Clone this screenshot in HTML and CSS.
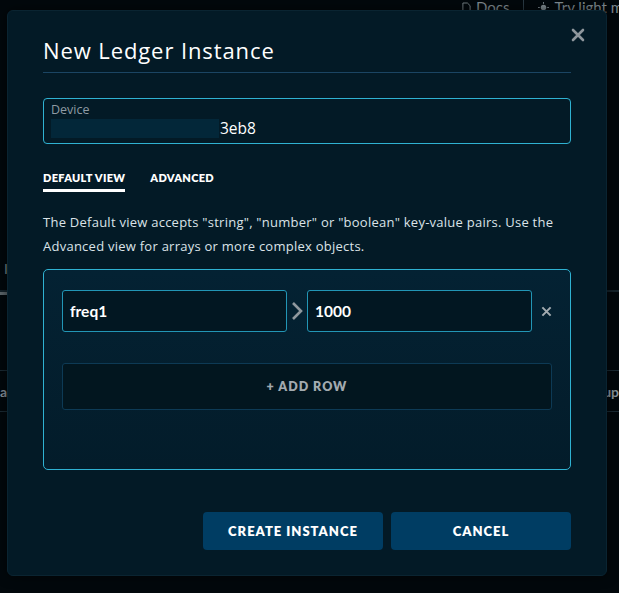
FILE: index.html
```html
<!DOCTYPE html>
<html lang="en">
<head>
<meta charset="utf-8">
<title>New Ledger Instance</title>
<link rel="stylesheet" href="styles.css">
</head>
<body>
<div class="page">
  <header class="topbar">
    <span class="top-link"><svg class="top-icon" viewBox="0 0 10 12" width="9" height="11"><path d="M1 1h5l3 3v7H1z" fill="none" stroke="#7f8a90" stroke-width="1"/></svg>Docs</span>
    <span class="top-sep"></span>
    <span class="top-link"><svg class="top-icon" viewBox="0 0 12 12" width="11" height="11"><circle cx="6" cy="6" r="3" fill="#7f8a90"/><path d="M6 0v2M6 10v2M0 6h2M10 6h2" stroke="#7f8a90" stroke-width="1"/></svg>Try light mode</span>
  </header>
  <nav class="bg-tabs"><span class="bg-tab">Instances</span></nav>
  <div class="bg-table">
    <div class="bg-row"><span>a</span><span>up</span></div>
  </div>
</div>

<div class="modal">
  <button class="close" aria-label="Close">
    <svg viewBox="0 0 14 14" width="14" height="14"><path d="M2 2L12 12M12 2L2 12" stroke="#8e969c" stroke-width="2.6" stroke-linecap="round"/></svg>
  </button>
  <h1 class="title">New Ledger Instance</h1>

  <div class="field">
    <label class="field-label">Device</label>
    <div class="field-value"><span class="redact"></span>3eb8</div>
  </div>

  <div class="tabs">
    <span class="tab active">DEFAULT VIEW</span>
    <span class="tab">ADVANCED</span>
  </div>

  <p class="desc">The Default view accepts "string", "number" or "boolean" key-value pairs. Use the Advanced view for arrays or more complex objects.</p>

  <div class="kv-box">
    <div class="kv-row">
      <div class="kv-input">freq1</div>
      <span class="kv-arrow"><svg viewBox="0 0 12 20" width="12" height="20"><path d="M2 2L10 10L2 18" fill="none" stroke="#8f989e" stroke-width="2.6"/></svg></span>
      <div class="kv-input">1000</div>
      <span class="kv-remove"><svg viewBox="0 0 12 12" width="11" height="11"><path d="M1.5 1.5L10.5 10.5M10.5 1.5L1.5 10.5" stroke="#a3abb0" stroke-width="2.2"/></svg></span>
    </div>
    <div class="add-row">+ ADD ROW</div>
  </div>

  <div class="actions">
    <button class="btn">CREATE INSTANCE</button>
    <button class="btn">CANCEL</button>
  </div>
</div>
</body>
</html>
```

FILE: styles.css
```css
* { box-sizing: border-box; }
html, body { margin: 0; padding: 0; }
body {
  background: #02080c;
  font-family: "Open Sans", "Lato", sans-serif;
  color: #e6ecef;
  width: 619px;
  height: 593px;
  overflow: hidden;
  position: relative;
}

/* background page */
.page { width: 619px; }
.topbar {
  display: flex;
  justify-content: flex-start;
  align-items: center;
  height: 20px;
  padding-left: 462px;
  gap: 14px;
  margin-top: -3px;
  font-family: "Lato", sans-serif;
  font-size: 15px;
  color: #7f8a90;
  white-space: nowrap;
  overflow: hidden;
}
.top-link { display: flex; align-items: center; gap: 5px; flex-shrink: 0; }
.top-sep { width: 1px; height: 20px; background: #2a3a44; flex-shrink: 0; }
.bg-tabs {
  margin-top: 240px;
  height: 35px;
  border-bottom: 2px solid #15232b;
  position: relative;
}
.bg-tab {
  display: inline-block;
  padding: 0 0 11px 4px;
  font-family: "Lato", sans-serif;
  font-size: 14px;
  color: #7c878d;
  border-bottom: 3px solid #5d676c;
  height: 35px;
}
.bg-table { margin-top: 78px; }
.bg-row {
  display: flex;
  justify-content: space-between;
  height: 42px;
  align-items: center;
  border-top: 1px solid #1a2a33;
  border-bottom: 1px solid #1a2a33;
  font-family: "Lato", sans-serif;
  font-size: 14px;
  font-weight: 700;
  color: #88939a;
}

/* modal */
.modal {
  position: absolute;
  left: 7px;
  top: 10px;
  width: 600px;
  height: 566px;
  background: #031a26;
  border: 1px solid #0a2431;
  border-radius: 6px;
  padding: 24px 35px 0 35px;
  box-shadow: 0 0 12px rgba(0,0,0,0.6);
}
.close {
  position: absolute;
  top: 17px;
  right: 21px;
  background: none;
  border: 0;
  padding: 0;
  width: 14px;
  height: 14px;
  display: block;
}
.close svg { display: block; }
.title {
  margin: 0;
  font-size: 22px;
  line-height: 30px;
  font-weight: 400;
  color: #ffffff;
  padding-bottom: 7px;
  border-bottom: 1px solid #1b4563;
  letter-spacing: 0.9px;
}
.field {
  margin-top: 25px;
  height: 46px;
  border: 1px solid #2fb2d2;
  border-radius: 4px;
  padding: 3px 7px 0 7px;
}
.field-label {
  display: block;
  font-size: 12.5px;
  line-height: 16px;
  color: #8f9ba3;
}
.field-value {
  display: flex;
  align-items: center;
  font-size: 15.5px;
  line-height: 21px;
  color: #ffffff;
}
.redact {
  display: inline-block;
  width: 168px;
  height: 19px;
  background: #032739;
  margin-right: 1px;
}
.tabs {
  display: flex;
  gap: 25px;
  margin-top: 27px;
  font-family: "Lato", sans-serif;
}
.tab {
  font-size: 11px;
  font-weight: 800;
  line-height: 14px;
  padding-bottom: 4px;
  border-bottom: 3px solid transparent;
  color: #ffffff;
  letter-spacing: 0.3px;
}
.tab.active { border-bottom-color: #ffffff; }
.desc {
  margin: 18px 0 0 0;
  font-size: 13px;
  line-height: 24px;
  color: #dbe3e8;
  letter-spacing: 0.25px;
}
.kv-box {
  margin-top: 11px;
  height: 201px;
  border: 1px solid #2fb2d2;
  border-radius: 5px;
  background: linear-gradient(#042233, #031c2a);
  padding: 20px 18px 0 18px;
}
.kv-row {
  display: flex;
  align-items: center;
}
.kv-input {
  width: 225px;
  height: 42px;
  border: 1px solid #2296b6;
  border-radius: 3px;
  background: #021722;
  display: flex;
  align-items: center;
  padding-left: 7px;
  font-family: "Lato", sans-serif;
  font-size: 15.5px;
  font-weight: 700;
  color: #ffffff;
}
.kv-arrow {
  width: 20px;
  display: flex;
  justify-content: center;
}
.kv-arrow svg, .kv-remove svg { display: block; }
.kv-remove {
  width: 20px;
  display: flex;
  justify-content: flex-end;
  padding-right: 0;
}
.add-row {
  margin-top: 31px;
  height: 47px;
  border: 1px solid #0d3a55;
  border-radius: 3px;
  background: #02161f;
  display: flex;
  align-items: center;
  justify-content: center;
  font-family: "Lato", sans-serif;
  font-size: 12.5px;
  font-weight: 800;
  letter-spacing: 1px;
  color: #a2aaaf;
}
.actions {
  display: flex;
  justify-content: flex-end;
  gap: 8px;
  margin-top: 42px;
}
.btn {
  width: 180px;
  height: 38px;
  border: 0;
  border-radius: 4px;
  background: #003d63;
  color: #ffffff;
  font-family: "Lato", sans-serif;
  font-size: 13px;
  font-weight: 800;
  letter-spacing: 1px;
  padding: 0;
}
```
